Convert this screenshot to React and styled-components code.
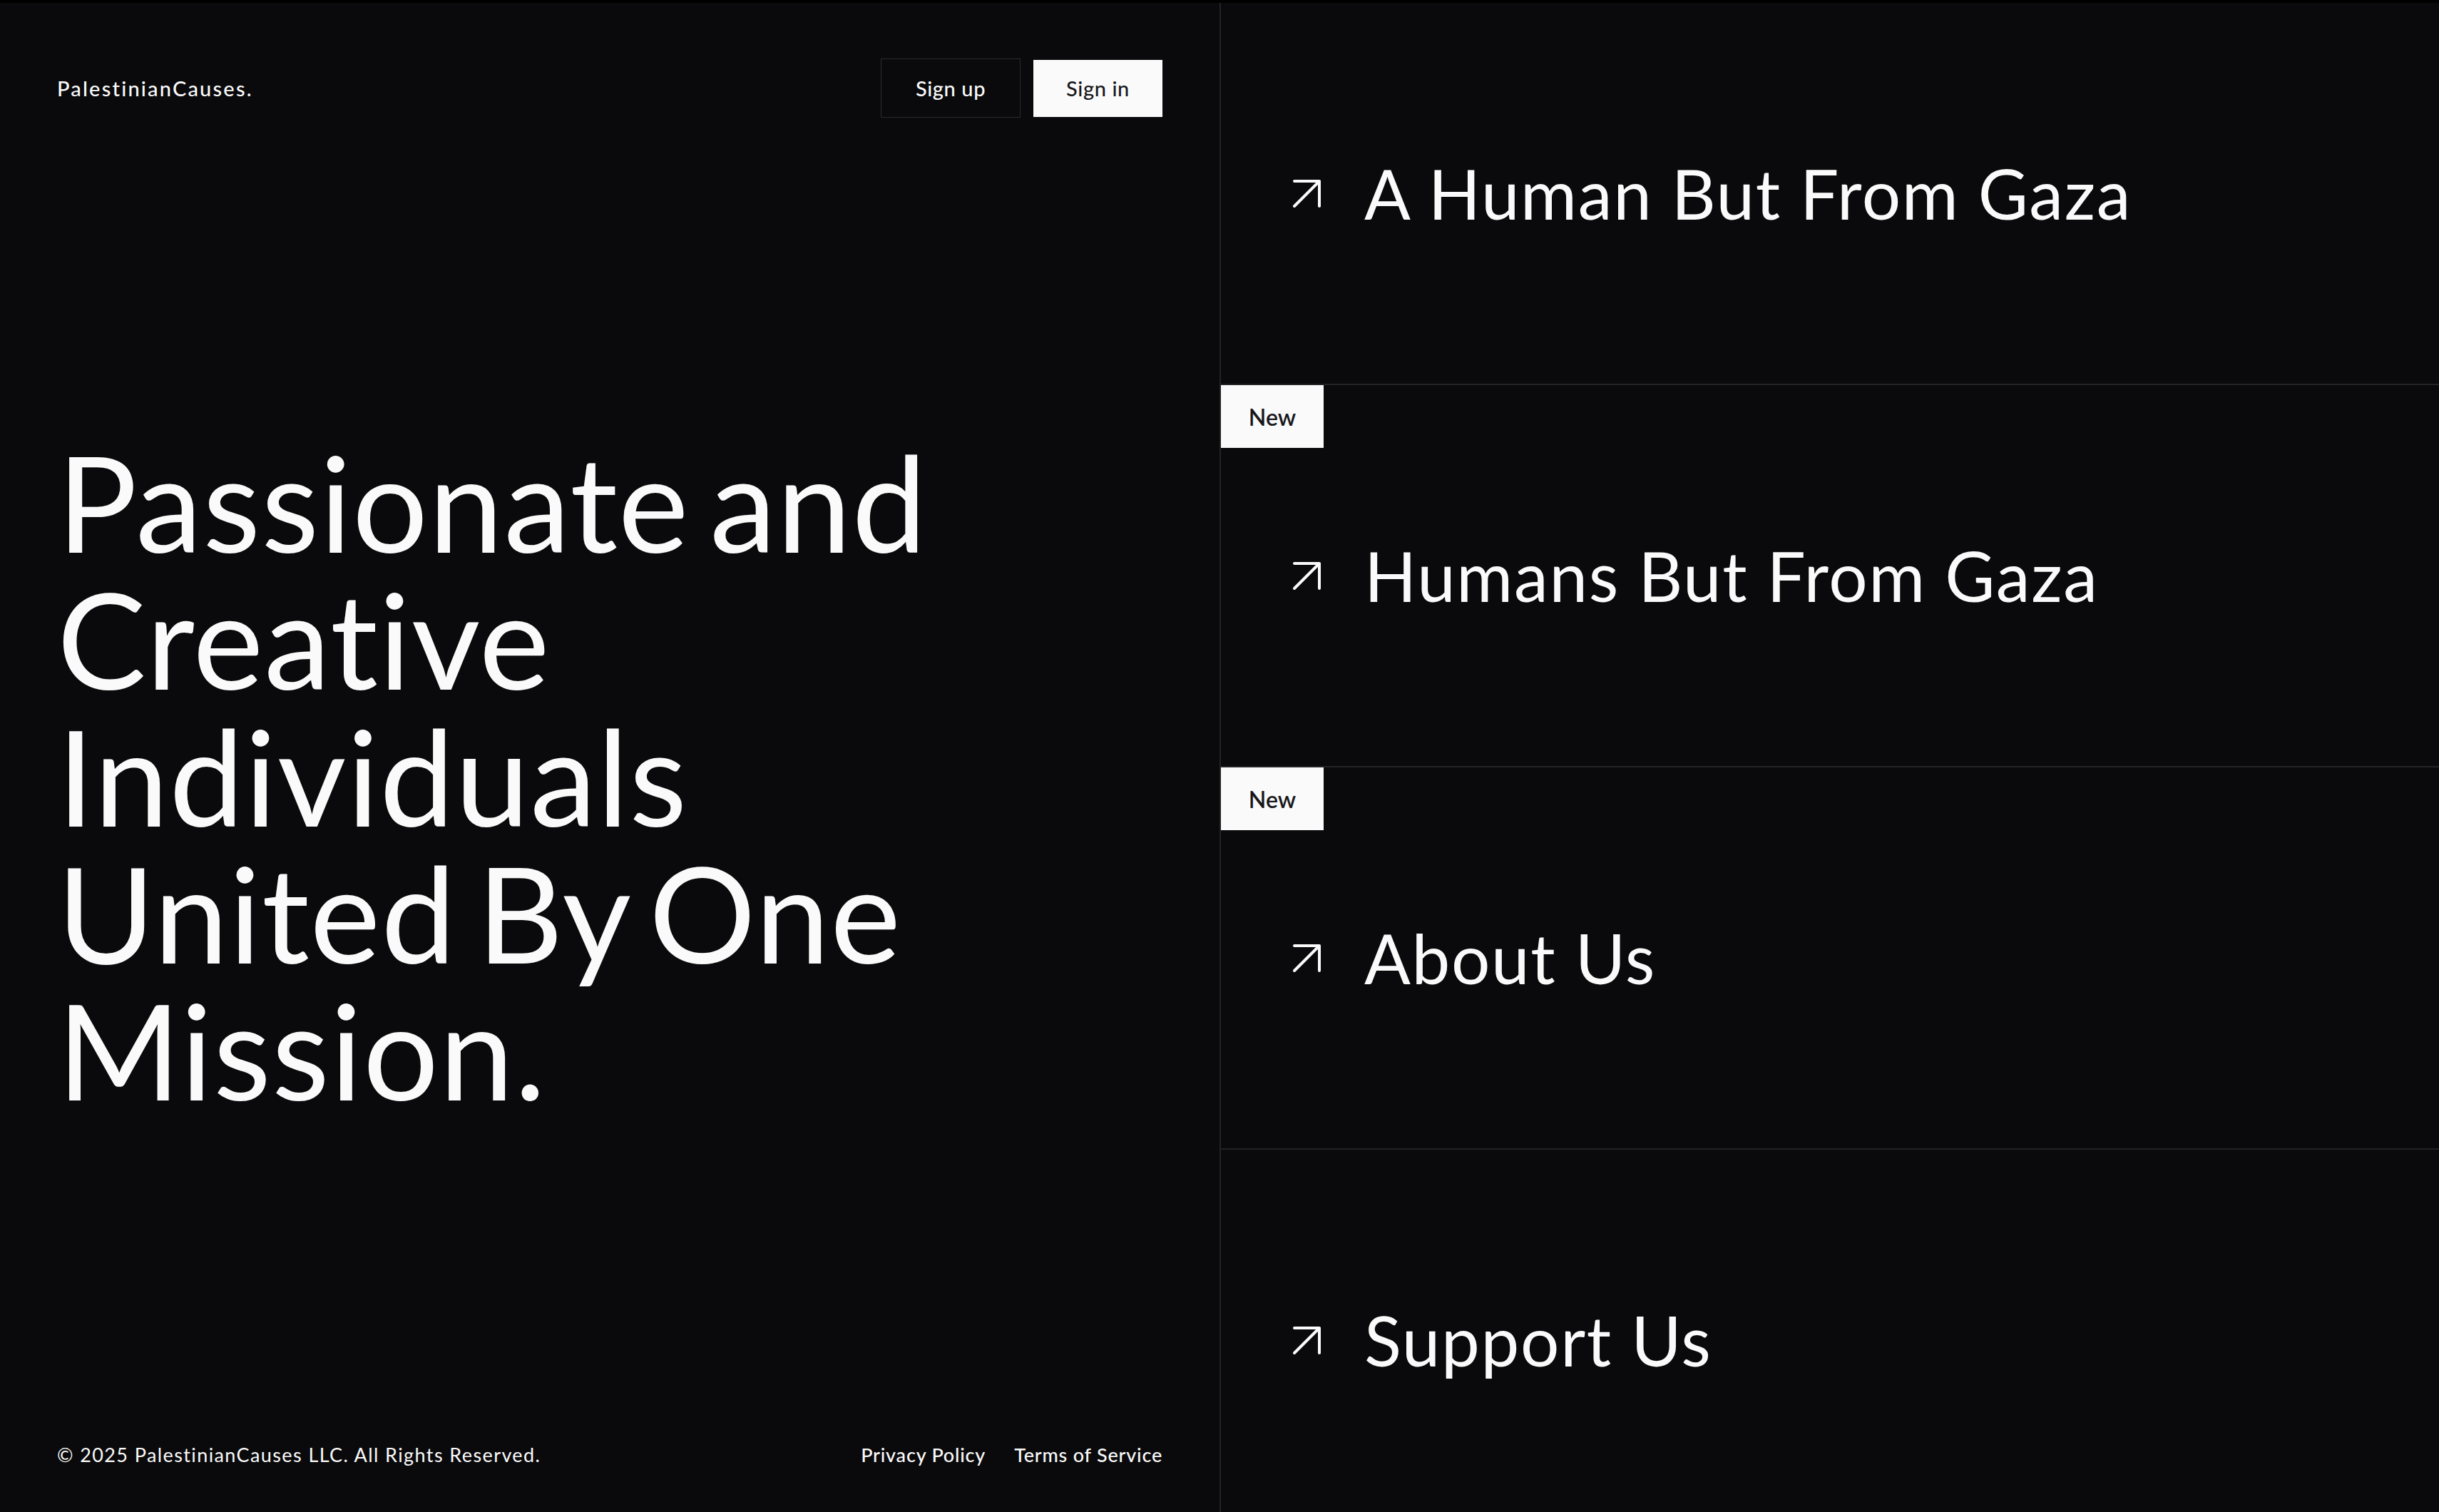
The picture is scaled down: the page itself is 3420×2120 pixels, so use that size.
import styled, { createGlobalStyle } from 'styled-components';

const GlobalStyle = createGlobalStyle`
  html, body {
    margin: 0;
    padding: 0;
    background: #0a0a0c;
  }
  body {
    font-family: Lato, "Noto Sans", "Liberation Sans", sans-serif;
    color: #fafafa;
  }
  * {
    box-sizing: border-box;
  }
`;

const Page = styled.div`
  display: grid;
  grid-template-columns: 1710px 1fr;
  height: 2120px;
  border-top: 4px solid #000;
  background: #0a0a0c;
  overflow: hidden;
`;

const Left = styled.section`
  display: flex;
  flex-direction: column;
  padding: 78px 80px 64px;
  height: 2116px;
`;

const Header = styled.header`
  display: flex;
  align-items: center;
  justify-content: space-between;
  height: 83px;
`;

const Logo = styled.a`
  font-size: 29px;
  font-weight: 500;
  letter-spacing: 2.2px;
  color: #fafafa;
  text-decoration: none;
`;

const Actions = styled.div`
  display: flex;
  align-items: center;
  gap: 18px;
`;

const Btn = styled.button`
  font-family: inherit;
  font-size: 29px;
  font-weight: 500;
  letter-spacing: 0.6px;
  height: ${(p) => (p.$solid ? '80px' : '83px')};
  width: ${(p) => (p.$solid ? '181px' : '196px')};
  padding: 0;
  border: ${(p) => (p.$solid ? 'none' : '1px solid #2b2b2e')};
  border-radius: 0;
  background: ${(p) => (p.$solid ? '#fafafa' : '#0a0a0c')};
  color: ${(p) => (p.$solid ? '#18181b' : '#fafafa')};
  cursor: pointer;
`;

const Hero = styled.div`
  flex: 1;
  display: flex;
  align-items: center;
  padding-bottom: 16px;
`;

const Headline = styled.h1`
  margin: 0;
  font-size: 187px;
  line-height: 192px;
  font-weight: 400;
  letter-spacing: 1px;
  word-spacing: -20px;
  color: #fafafa;
`;

const Footer = styled.footer`
  display: flex;
  align-items: center;
  justify-content: space-between;
  font-size: 27px;
  line-height: 32px;
`;

const Copy = styled.span`
  letter-spacing: 1.4px;
`;

const Links = styled.nav`
  display: flex;
  gap: 40px;
`;

const FootLink = styled.a`
  color: #fafafa;
  font-weight: 500;
  letter-spacing: 0.8px;
  text-decoration: none;
`;

const Right = styled.section`
  border-left: 2px solid #232326;
  display: flex;
  flex-direction: column;
`;

const Row = styled.a`
  position: relative;
  flex: none;
  height: 536px;
  display: flex;
  align-items: center;
  gap: 61px;
  padding-left: 101px;
  border-bottom: 2px solid #232326;
  color: #fafafa;
  text-decoration: none;
`;

const Badge = styled.span`
  position: absolute;
  top: 0;
  left: 0;
  width: 144px;
  height: 88px;
  display: flex;
  align-items: center;
  justify-content: center;
  background: #fafafa;
  color: #18181b;
  font-size: 32px;
  font-weight: 600;
`;

const Title = styled.span`
  font-size: 96px;
  line-height: 1;
  font-weight: 400;
  letter-spacing: 1.7px;
`;

const Arrow = () => (
  <svg width="39" height="39" viewBox="0 0 39 39" fill="none" style={{ overflow: 'visible', flex: 'none' }}>
    <path d="M2 2h35v35M2 37 37 2" stroke="#fafafa" strokeWidth="4" strokeLinecap="round" strokeLinejoin="round" />
  </svg>
);

const items = [
  { title: 'A Human But From Gaza' },
  { title: 'Humans But From Gaza', isNew: true },
  { title: 'About Us', isNew: true },
  { title: 'Support Us' },
];

export default function App() {
  return (
    <>
      <GlobalStyle />
      <Page>
        <Left>
          <Header>
            <Logo href="#">PalestinianCauses.</Logo>
            <Actions>
              <Btn>Sign up</Btn>
              <Btn $solid>Sign in</Btn>
            </Actions>
          </Header>
          <Hero>
            <Headline>
              Passionate and
              <br />
              Creative
              <br />
              Individuals
              <br />
              United By One
              <br />
              Mission.
            </Headline>
          </Hero>
          <Footer>
            <Copy>© 2025 PalestinianCauses LLC. All Rights Reserved.</Copy>
            <Links>
              <FootLink href="#">Privacy Policy</FootLink>
              <FootLink href="#">Terms of Service</FootLink>
            </Links>
          </Footer>
        </Left>
        <Right>
          {items.map((item) => (
            <Row href="#" key={item.title}>
              {item.isNew && <Badge>New</Badge>}
              <Arrow />
              <Title>{item.title}</Title>
            </Row>
          ))}
        </Right>
      </Page>
    </>
  );
}
